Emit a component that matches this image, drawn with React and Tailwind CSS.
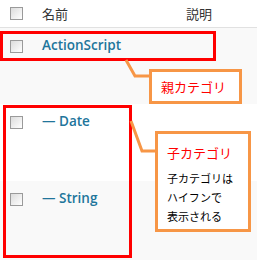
import React from 'react';

const Checkbox = () => (
  <span className="block w-[13px] h-[13px] border border-[#9a9a9a] bg-gradient-to-br from-[#dcdcdc] to-white shrink-0" />
);

const rows = [
  { name: 'ActionScript', bg: 'bg-[#f9f9f9]', h: 'h-[76px]', pt: 'pt-[11px]' },
  { name: '— Date', bg: 'bg-white', h: 'h-[77px]', pt: 'pt-[11px]' },
  { name: '— String', bg: 'bg-[#f9f9f9]', h: 'h-[79px]', pt: 'pt-[11px]' },
];

export default function App() {
  return (
    <div className="relative w-[257px] h-[261px] overflow-hidden bg-white font-['Noto_Sans_CJK_JP',sans-serif]">
      {/* table header */}
      <div className="flex items-center h-[28px] border-b border-[#e1e1e1] bg-white">
        <div className="w-[42px] pl-[10px]">
          <Checkbox />
        </div>
        <div className="w-[144px] text-[13px] text-[#333] leading-none">名前</div>
        <div className="text-[13px] text-[#333] leading-none">説明</div>
      </div>

      {/* rows */}
      {rows.map((row) => (
        <div key={row.name} className={`flex items-start ${row.bg} ${row.h} ${row.pt}`}>
          <div className="w-[42px] pl-[10px] pt-[1px]">
            <Checkbox />
          </div>
          <div className="font-['Open_Sans',sans-serif] font-semibold text-[13.5px] leading-none text-[#21759b]">
            {row.name}
          </div>
        </div>
      ))}

      {/* annotations */}
      <div className="absolute left-0 top-[31px] w-[216px] h-[30px] border-[3px] border-[#ff0000]" />
      <div className="absolute left-[3px] top-[105px] w-[129px] h-[153px] border-[3px] border-[#ff0000]" />

      <svg className="absolute inset-0" width="257" height="261">
        <polyline points="126,60 135,76 150,76" fill="none" stroke="#f79646" strokeWidth="3" />
        <polyline points="131,121 142,151 156,151" fill="none" stroke="#f79646" strokeWidth="3" />
      </svg>

      <div className="absolute left-[149px] top-[69px] w-[93px] h-[35px] border-[3px] border-[#f79646] bg-white pl-[9px] pt-[8px]">
        <div className="text-[13px] leading-none text-[#ff0000]">親カテゴリ</div>
      </div>

      <div className="absolute left-[155px] top-[131px] w-[96px] h-[101px] border-[3px] border-[#f79646] bg-white pl-[9px] pt-[12px]">
        <div className="text-[13px] leading-none text-[#ff0000] mb-[10px]">子カテゴリ</div>
        <div className="text-[11px] leading-[19px] text-black">
          <div>子カテゴリは</div>
          <div>ハイフンで</div>
          <div>表示される</div>
        </div>
      </div>
    </div>
  );
}
